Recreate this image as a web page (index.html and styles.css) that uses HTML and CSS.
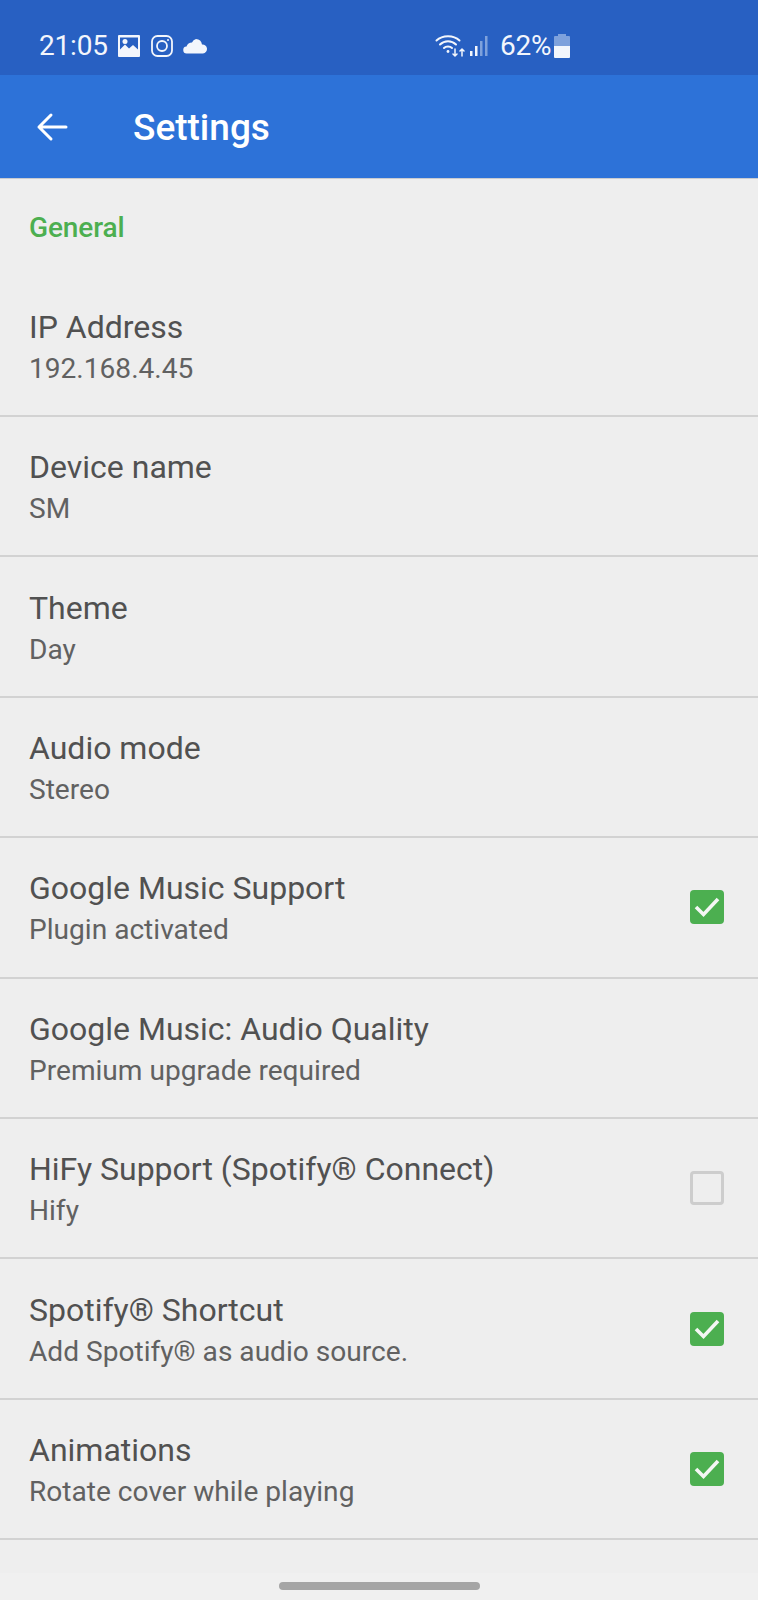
FILE: index.html
```html
<!DOCTYPE html>
<html lang="en">
<head>
<meta charset="utf-8">
<title>Settings</title>
<link rel="stylesheet" href="styles.css">
</head>
<body>
<div class="screen">
  <header class="status">
    <div class="status-left">
      <span class="clock">21:05</span>
      <svg class="ic" width="24" height="24" viewBox="0 0 24 24"><path fill="#f3f6fc" fill-rule="evenodd" d="M2 1h20a1 1 0 0 1 1 1v20a1 1 0 0 1-1 1H2a1 1 0 0 1-1-1V2a1 1 0 0 1 1-1zm1 2.500v12l5-5 4 4 4-3.500 5 4.500V3.500z"/><circle cx="8" cy="7.500" r="2.500" fill="#f3f6fc"/></svg>
      <svg class="ic" width="24" height="24" viewBox="0 0 24 24" fill="none" stroke="#f3f6fc" stroke-width="1.800"><rect x="2" y="2" width="20" height="20" rx="5.500"/><circle cx="12" cy="12" r="5"/><circle cx="18" cy="6" r="1" fill="#f3f6fc" stroke="none"/></svg>
      <svg class="ic" width="25" height="16" viewBox="0 0 25 16"><path fill="#f3f6fc" d="M4 15.500a3.500 3.500 0 0 1-.5-7A6 6 0 0 1 9 4.500 6 6 0 0 1 13 1a6.500 6.500 0 0 1 6 5.500 4.500 4.500 0 0 1 1 9z"/></svg>
    </div>
    <div class="status-right">
      <svg class="ic" width="30" height="24" viewBox="0 0 30 24" fill="none" stroke="#f3f6fc" stroke-width="2" stroke-linecap="round"><path d="M1.500 6.500C7.500.8 18.500.8 24.500 6.500"/><path d="M5 10.500c4.500-4.500 11.500-4.500 16 0"/><path d="M9 14c2-2 6-2 8 0"/><circle cx="13" cy="17.500" r="1.400" fill="#f3f6fc" stroke="none"/><path d="M20 15v7M18 20l2 2 2-2M27 22v-7M25 17l2-2 2 2" stroke-width="1.500"/></svg>
      <svg class="ic" width="20" height="22" viewBox="0 0 20 22"><rect x="1" y="16" width="2.500" height="5" fill="#f3f6fc"/><rect x="6" y="11" width="2.500" height="10" fill="#f3f6fc"/><rect x="11" y="6" width="2.500" height="15" fill="#7ea1dc"/><rect x="16" y="1" width="2.500" height="20" fill="#7ea1dc"/></svg>
      <span class="pct">62%</span>
      <svg class="ic" width="16" height="24" viewBox="0 0 16 24"><path fill="#7ea1dc" d="M4 0h8v2h3a1 1 0 0 1 1 1v9H0V3a1 1 0 0 1 1-1h3z"/><path fill="#f3f6fc" d="M0 12h16v11a1 1 0 0 1-1 1H1a1 1 0 0 1-1-1z"/></svg>
    </div>
  </header>
  <div class="toolbar">
    <svg class="back" width="32" height="30" viewBox="0 0 32 30" fill="none" stroke="#fff" stroke-width="3" stroke-linecap="round" stroke-linejoin="round"><path d="M30 15H3M15 3 3 15l12 12"/></svg>
    <h1 class="title">Settings</h1>
  </div>
  <main class="list">
    <div class="section">General</div>
    <div class="row first"><div class="text"><div class="t">IP Address</div><div class="s">192.168.4.45</div></div></div>
    <div class="row"><div class="text"><div class="t">Device name</div><div class="s">SM</div></div></div>
    <div class="row"><div class="text"><div class="t">Theme</div><div class="s">Day</div></div></div>
    <div class="row"><div class="text"><div class="t">Audio mode</div><div class="s">Stereo</div></div></div>
    <div class="row"><div class="text"><div class="t">Google Music Support</div><div class="s">Plugin activated</div></div><span class="cb on"><svg width="34" height="34" viewBox="0 0 34 34" fill="none"><path d="M6 17l7.500 7.500L28 9" stroke="#f4f6f4" stroke-width="3.600"/></svg></span></div>
    <div class="row"><div class="text"><div class="t">Google Music: Audio Quality</div><div class="s">Premium upgrade required</div></div></div>
    <div class="row"><div class="text"><div class="t">HiFy Support (Spotify® Connect)</div><div class="s">Hify</div></div><span class="cb off"></span></div>
    <div class="row"><div class="text"><div class="t">Spotify® Shortcut</div><div class="s">Add Spotify® as audio source.</div></div><span class="cb on"><svg width="34" height="34" viewBox="0 0 34 34" fill="none"><path d="M6 17l7.500 7.500L28 9" stroke="#f4f6f4" stroke-width="3.600"/></svg></span></div>
    <div class="row"><div class="text"><div class="t">Animations</div><div class="s">Rotate cover while playing</div></div><span class="cb on"><svg width="34" height="34" viewBox="0 0 34 34" fill="none"><path d="M6 17l7.500 7.500L28 9" stroke="#f4f6f4" stroke-width="3.600"/></svg></span></div>
  </main>
  <footer class="nav"><span class="pill"></span></footer>
</div>
</body>
</html>
```
FILE: styles.css
```css
* { box-sizing: border-box; }
html, body { margin: 0; padding: 0; }
body { font-family: Roboto, "Liberation Sans", sans-serif; background: #eeeeee; }
.screen { width: 758px; height: 1600px; display: flex; flex-direction: column; overflow: hidden; background: #eeeeee; }
.status { height: 75px; flex: none; background: #2860c2; display: flex; padding: 16px 0 0 39px; color: #f3f6fc; align-items: center; }
.status-left { display: flex; align-items: center; gap: 9px; width: 396px; }
.status-left .ic { margin-top: 1px; }
.status-right { display: flex; align-items: center; gap: 4px; }
.status-right .pct { margin: 0 -1px 0 7px; }
.clock, .pct { font-size: 28px; line-height: 32px; letter-spacing: -0.2px; }
.ic { display: block; flex: none; }
.toolbar { height: 104px; flex: none; background: #2d72d8; display: flex; align-items: center; padding: 0 0 0 36px; border-bottom: 1px solid #c9cbd0; box-shadow: 0 2px 3px rgba(0, 0, 0, 0.06); }
.back { display: block; flex: none; }
.title { margin: 2px 0 0 65px; font-size: 37px; font-weight: 500; color: #fff; line-height: 44px; }
.list { flex: 1; display: flex; flex-direction: column; background: #eeeeee; }
.section { height: 98px; flex: none; padding: 32px 29px 0; font-size: 28px; line-height: 34px; font-weight: 500; color: #4caf50; letter-spacing: -0.1px; }
.row { height: 140.4px; flex: none; display: flex; align-items: center; padding: 0 34px 0 29px; border-bottom: 2px solid #d2d2d2; }
.row.first { height: 140px; }
.text { flex: 1; min-width: 0; padding-top: 2px; }
.t { font-size: 32px; line-height: 42px; color: #515151; }
.s { font-size: 28.1px; line-height: 38px; margin-top: 2px; color: #616161; }
.cb { width: 34px; height: 34px; border-radius: 4px; display: block; flex: none; }
.cb svg { display: block; }
.cb.on { background: #4caf50; }
.cb.off { border: 3px solid #cdcdcd; }
.nav { height: 27px; flex: none; margin-top: auto; background: #f0f0f0; display: flex; justify-content: center; padding-top: 9px; }
.pill { width: 201px; height: 8px; border-radius: 4px; background: #a5a5a5; display: block; }
```
